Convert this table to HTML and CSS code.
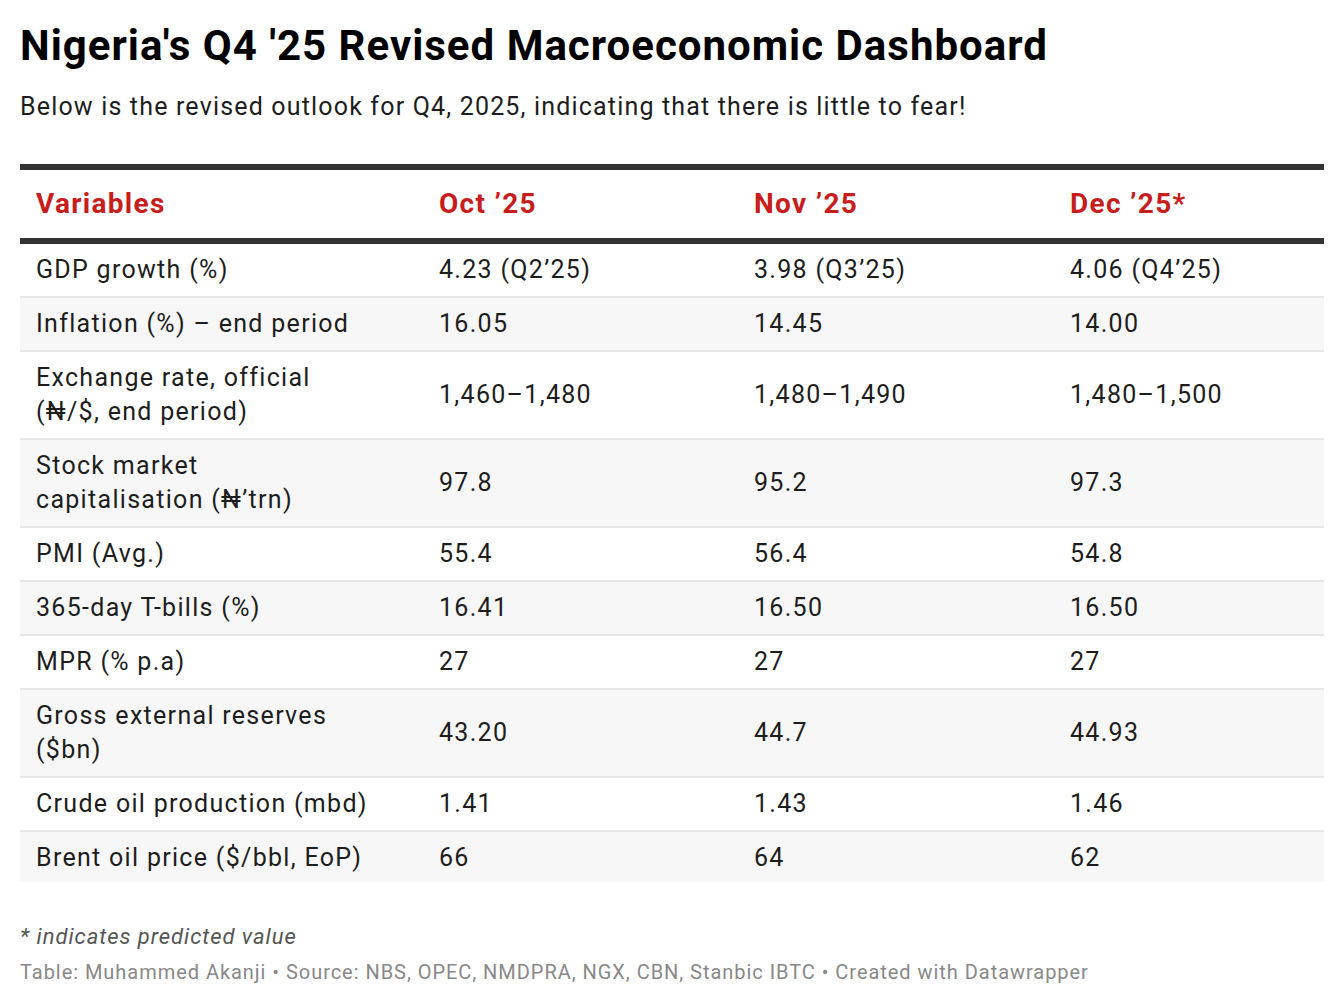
FILE: index.html
```html
<!DOCTYPE html>
<html lang="en">
<head>
<meta charset="utf-8">
<title>Nigeria's Q4 '25 Revised Macroeconomic Dashboard</title>
<link rel="stylesheet" href="styles.css">
</head>
<body>
<div class="chart">
  <h1 class="title">Nigeria's Q4 '25 Revised Macroeconomic Dashboard</h1>
  <p class="subtitle">Below is the revised outlook for Q4, 2025, indicating that there is little to fear!</p>
  <table class="data">
    <colgroup>
      <col class="c1"><col class="c2"><col class="c3"><col class="c4">
    </colgroup>
    <thead>
      <tr><th>Variables</th><th>Oct ’25</th><th>Nov ’25</th><th>Dec ’25*</th></tr>
    </thead>
    <tbody>
      <tr><td>GDP growth (%)</td><td>4.23 (Q2’25)</td><td>3.98 (Q3’25)</td><td>4.06 (Q4’25)</td></tr>
      <tr><td>Inflation (%) – end period</td><td>16.05</td><td>14.45</td><td>14.00</td></tr>
      <tr><td>Exchange rate, official<br>(₦/$, end period)</td><td>1,460–1,480</td><td>1,480–1,490</td><td>1,480–1,500</td></tr>
      <tr><td>Stock market<br>capitalisation (₦’trn)</td><td>97.8</td><td>95.2</td><td>97.3</td></tr>
      <tr><td>PMI (Avg.)</td><td>55.4</td><td>56.4</td><td>54.8</td></tr>
      <tr><td>365-day T-bills (%)</td><td>16.41</td><td>16.50</td><td>16.50</td></tr>
      <tr><td>MPR (% p.a)</td><td>27</td><td>27</td><td>27</td></tr>
      <tr><td>Gross external reserves<br>($bn)</td><td>43.20</td><td>44.7</td><td>44.93</td></tr>
      <tr><td>Crude oil production (mbd)</td><td>1.41</td><td>1.43</td><td>1.46</td></tr>
      <tr><td>Brent oil price ($/bbl, EoP)</td><td>66</td><td>64</td><td>62</td></tr>
    </tbody>
  </table>
  <p class="note">* indicates predicted value</p>
  <p class="source">Table: Muhammed Akanji • Source: NBS, OPEC, NMDPRA, NGX, CBN, Stanbic IBTC • Created with Datawrapper</p>
</div>
</body>
</html>
```
FILE: styles.css
```css
html, body {
  margin: 0;
  padding: 0;
  background: #ffffff;
}

body {
  font-family: Roboto, "Liberation Sans", sans-serif;
  color: #1d1d1d;
}

.chart {
  padding: 21px 20px 0 20px;
}

.title {
  margin: 0;
  font-size: 42px;
  line-height: 50px;
  font-weight: 700;
  letter-spacing: 1px;
  color: #000000;
}

.subtitle {
  margin: 20px 0 0 0;
  font-size: 25px;
  line-height: 32px;
  letter-spacing: 1.17px;
  color: #1d1d1d;
}

.data {
  margin-top: 41px;
  width: 1304px;
  border-collapse: collapse;
  table-layout: fixed;
  border-top: 6px solid #333333;
}

.c1 { width: 403px; }
.c2 { width: 315px; }
.c3 { width: 316px; }
.c4 { width: 270px; }

.data th {
  text-align: left;
  font-size: 28px;
  line-height: 34px;
  font-weight: 700;
  letter-spacing: 1.3px;
  color: #c71e1d;
  padding: 17px 16px;
  border-bottom: 6px solid #333333;
}

.data td {
  font-size: 25px;
  line-height: 34px;
  letter-spacing: 1.3px;
  padding: 9px 16px;
  vertical-align: middle;
  color: #1d1d1d;
  border-bottom: 2px solid #e6e6e6;
}

.data tbody tr:nth-child(even) td {
  background: #f7f7f7;
}

.data tbody tr:last-child td {
  border-bottom: none;
  padding-bottom: 7px;
}

.note {
  margin: 40px 0 0 0;
  font-size: 22px;
  line-height: 30px;
  font-style: italic;
  letter-spacing: 0.96px;
  color: #555555;
}

.source {
  margin: 6px 0 0 0;
  font-size: 20px;
  line-height: 28px;
  letter-spacing: 0.96px;
  color: #888888;
}
```
